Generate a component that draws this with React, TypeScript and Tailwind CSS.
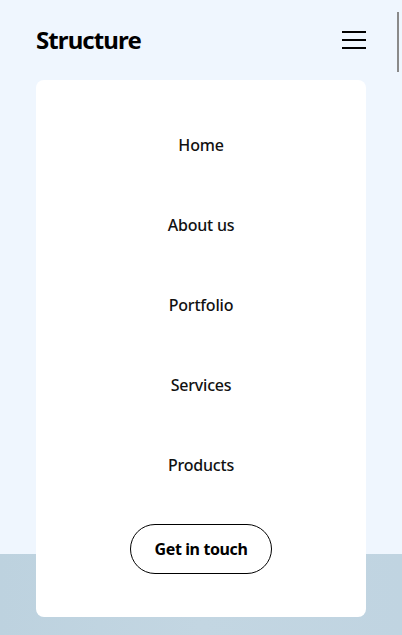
const links = ['Home', 'About us', 'Portfolio', 'Services', 'Products'];

const App = () => {
  return (
    <div
      className="relative w-full h-[635px] overflow-hidden bg-[#eff6fe] flex flex-col"
      style={{ fontFamily: '"Noto Sans", "Open Sans", sans-serif' }}
    >
      {/* Header */}
      <header className="h-20 px-9 flex items-center justify-between shrink-0">
        <div className="text-[24px] font-bold tracking-[-0.9px] text-black leading-none">Structure</div>
        <button className="w-6 h-5 flex flex-col justify-between py-[1px]">
          <span className="block h-[2px] w-6 bg-black" />
          <span className="block h-[2px] w-6 bg-black" />
          <span className="block h-[2px] w-6 bg-black" />
        </button>
      </header>

      {/* Page content behind the menu */}
      <div className="flex-1" />
      <section className="h-[81px] shrink-0 bg-gradient-to-r from-[#bdd2df] via-[#c3d6e2] to-[#c0d4e1]" />

      {/* Scrollbar thumb */}
      <div className="absolute right-[3px] top-[12px] w-[2px] h-[60px] bg-[#8a8a8a]" />

      {/* Mobile menu overlay */}
      <nav className="absolute left-9 right-9 top-20 h-[537px] bg-white rounded-lg flex flex-col items-center pt-[25px]">
        {links.map((label) => (
          <a key={label} className="h-20 flex items-center justify-center text-[16px] font-medium tracking-[-0.2px] text-[#111]">
            {label}
          </a>
        ))}
        <button className="mt-[19px] w-[142px] h-[50px] rounded-full border border-black text-[16px] font-bold tracking-[-0.4px] text-black">
          Get in touch
        </button>
      </nav>
    </div>
  );
};

export default App;
